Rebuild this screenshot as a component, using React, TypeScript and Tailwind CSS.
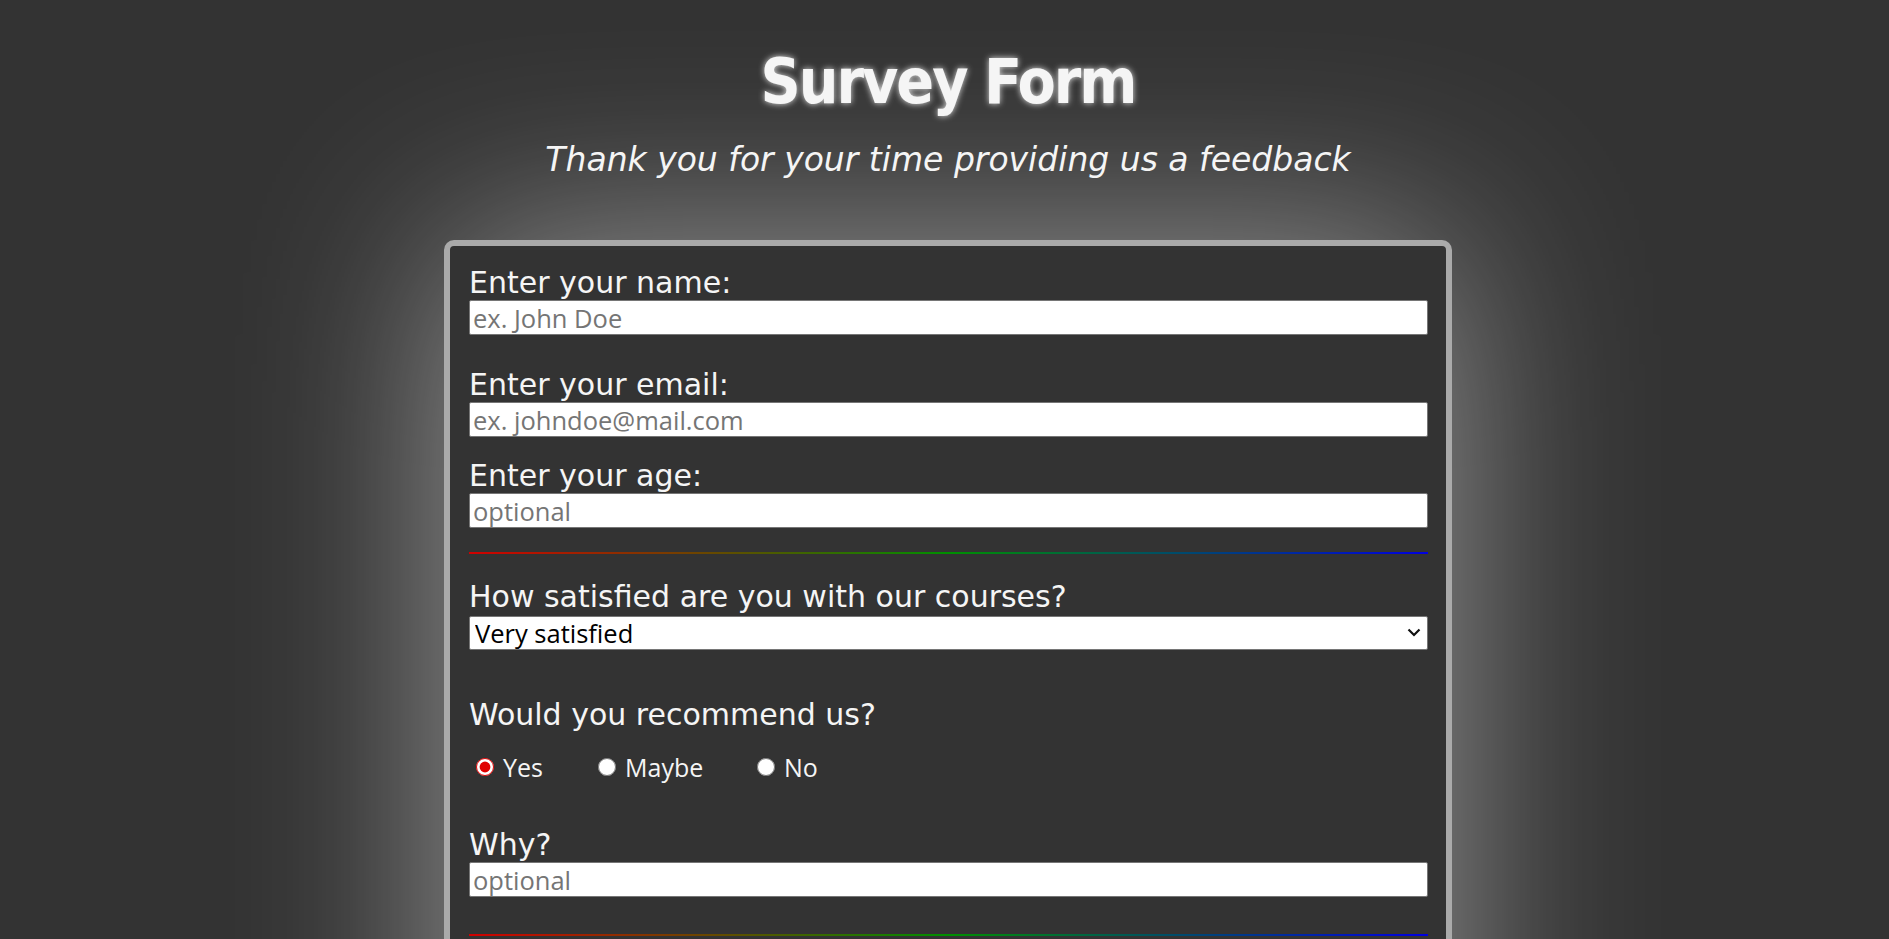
import React, { useState } from 'react';

const labelCls = "block text-[30px] leading-[34px] text-[#f5f5f5]";
const inputCls =
  "block w-full h-[35px] rounded-[2px] border border-[#767676] bg-white px-[3px] font-['Open_Sans'] text-[25.5px] leading-[33px] text-black placeholder:text-[#757575] outline-none";

const Divider = ({ className }: { className: string }) => (
  <div className={`h-[2px] w-full bg-[linear-gradient(to_right,#d00000,#009000,#0000e0)] ${className}`} />
);

export default function App() {
  const [recommend, setRecommend] = useState('yes');
  const [satisfaction, setSatisfaction] = useState('very');

  const options = [
    { value: 'yes', label: 'Yes', width: 'w-[122px]' },
    { value: 'maybe', label: 'Maybe', width: 'w-[159px]' },
    { value: 'no', label: 'No', width: 'w-[100px]' },
  ];

  return (
    <div className="h-screen overflow-hidden bg-[#333333] pl-[7px] pt-[46px] font-['DejaVu_Sans',sans-serif]">
      <h1 className="text-center font-['DejaVu_Sans_Condensed','DejaVu_Sans',sans-serif] text-[62px] font-bold leading-[72px] tracking-[-2px] text-[#f5f5f5] [text-shadow:0_0_6px_rgba(255,255,255,0.85)]">
        Survey Form
      </h1>
      <p className="mt-[23px] text-center text-[33px] italic leading-[38px] text-[#f5f5f5]">
        Thank you for your time providing us a feedback
      </p>

      <form
        onSubmit={e => e.preventDefault()}
        className="mx-auto mt-[61px] w-[1008px] rounded-[10px] border-[6px] border-[#aaaaaa] bg-[#333333] pb-[40px] pl-[19px] pr-[18px] pt-[20px] shadow-[0_0_200px_rgba(255,255,255,0.5)]"
      >
        <label htmlFor="name" className={labelCls}>Enter your name:</label>
        <input id="name" type="text" placeholder="ex. John Doe" className={inputCls} />

        <label htmlFor="email" className={`${labelCls} mt-[33px]`}>Enter your email:</label>
        <input id="email" type="email" placeholder="ex. johndoe@mail.com" className={inputCls} />

        <label htmlFor="age" className={`${labelCls} mt-[22px]`}>Enter your age:</label>
        <input id="age" type="number" placeholder="optional" className={inputCls} />

        <Divider className="mt-[24px]" />

        <label htmlFor="satisfaction" className={`${labelCls} mt-[26px]`}>
          How satisfied are you with our courses?
        </label>
        <div className="relative mt-[2px]">
          <select
            id="satisfaction"
            value={satisfaction}
            onChange={e => setSatisfaction(e.target.value)}
            className="block h-[34px] w-full appearance-none rounded-[2px] border border-[#767676] bg-white pl-[5px] font-['Open_Sans'] text-[25.5px] leading-[32px] text-black outline-none"
          >
            <option value="very">Very satisfied</option>
            <option value="satisfied">Satisfied</option>
            <option value="neutral">Neutral</option>
            <option value="unsatisfied">Unsatisfied</option>
          </select>
          <svg
            className="pointer-events-none absolute right-[7px] top-[12px]"
            width="14"
            height="9"
            viewBox="0 0 14 9"
            fill="none"
          >
            <path d="M1.5 1.5 7 7l5.5-5.5" stroke="#111" strokeWidth="2.2" />
          </svg>
        </div>

        <p className={`${labelCls} mt-[48px]`}>Would you recommend us?</p>
        <div className="mt-[18px] flex h-[34px] items-center pl-[7px]">
          {options.map(opt => (
            <label key={opt.value} className={`flex items-center ${opt.width}`}>
              <input
                type="radio"
                name="recommend"
                value={opt.value}
                checked={recommend === opt.value}
                onChange={() => setRecommend(opt.value)}
                className="m-0 h-[18px] w-[18px] accent-[#e00000]"
              />
              <span className="ml-[9px] font-['Open_Sans'] text-[25px] leading-[34px] text-[#f5f5f5]">
                {opt.label}
              </span>
            </label>
          ))}
        </div>

        <label htmlFor="why" className={`${labelCls} mt-[44px]`}>Why?</label>
        <input id="why" type="text" placeholder="optional" className={inputCls} />

        <Divider className="mt-[37px]" />

        <label htmlFor="comments" className={`${labelCls} mt-[40px]`}>Any comments or suggestions?</label>
        <textarea id="comments" rows={4} className={`${inputCls} h-auto`} />

        <button
          type="submit"
          className="mt-[30px] block w-full rounded-[2px] border border-[#767676] bg-[#eeeeee] py-[4px] text-[25px] text-black"
        >
          Submit
        </button>
      </form>
    </div>
  );
}
